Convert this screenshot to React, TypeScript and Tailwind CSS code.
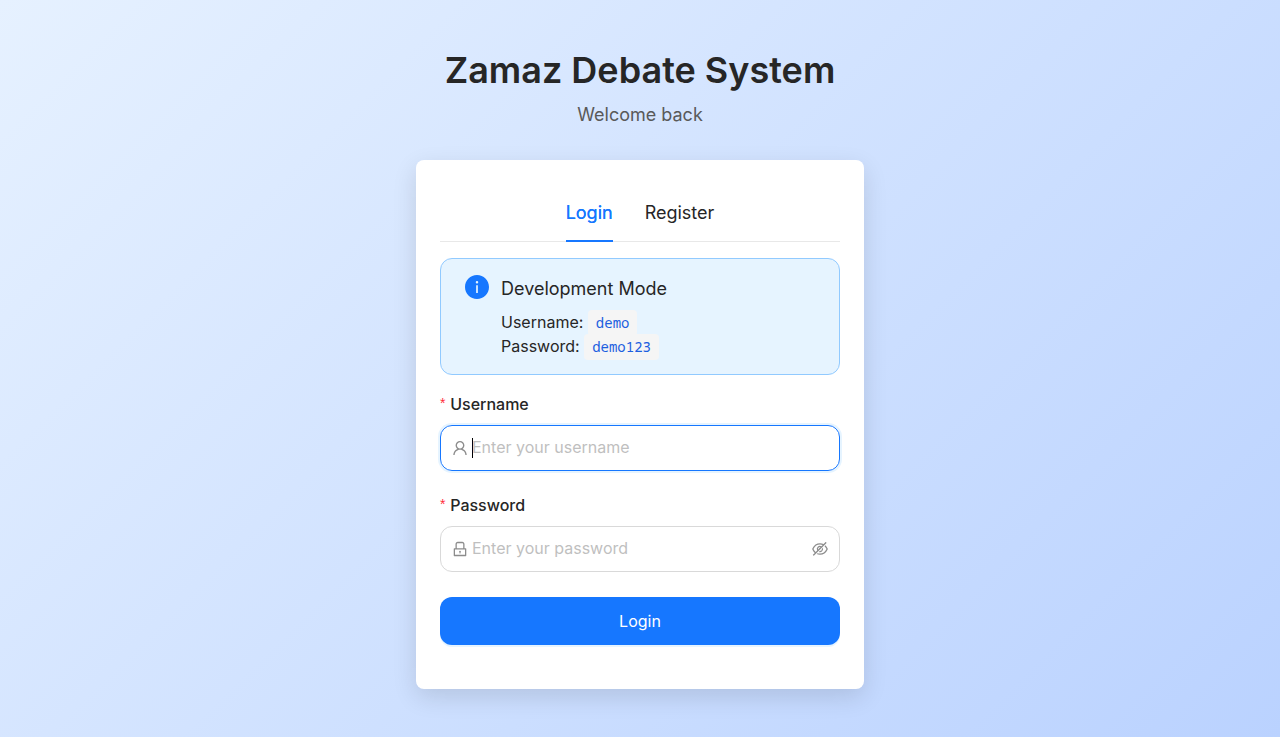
import {
  AiFillInfoCircle,
  AiOutlineEyeInvisible,
  AiOutlineLock,
  AiOutlineUser,
} from "react-icons/ai";

const iconBox = "64 64 896 896";

function FieldLabel({ children, htmlFor }: { children: string; htmlFor: string }) {
  return (
    <label htmlFor={htmlFor} className="flex h-6 items-center font-medium">
      <span className="mr-1 w-[6.2px] pb-[3px] font-['Liberation_Sans',sans-serif] text-sm font-normal leading-[18px] text-[#ff2d3a]">
        *
      </span>
      {children}
    </label>
  );
}

function Code({ children }: { children: string }) {
  return (
    <code className="rounded bg-[#f5f5f5] px-2 pb-1 pt-[3px] font-['Noto_Sans_Mono','DejaVu_Sans_Mono',monospace] text-sm text-[#1d5fe0]">
      {children}
    </code>
  );
}

export default function App() {
  return (
    <div className="flex h-[737px] flex-col items-center bg-[linear-gradient(135deg,#e6f1ff_0%,#bad2ff_100%)] pt-12 font-[Inter,sans-serif] text-base leading-6 text-[#262626]">
      <header className="text-center">
        <h1 className="text-4xl font-semibold leading-[45px]">Zamaz Debate System</h1>
        <p className="mt-2 text-lg leading-[27px] text-[#595959]">Welcome back</p>
      </header>

      <main className="mt-8 h-[529px] w-[448px] rounded-lg bg-white p-6 shadow-[0_8px_24px_rgba(0,0,0,0.12)]">
        <nav className="flex h-[58px] justify-center gap-8 border-b border-[#e8e8e8] text-lg leading-[27px]">
          <button className="h-[58px] border-b-2 border-[#1677ff] pt-px text-[#1677ff] [text-shadow:0_0_0.25px_currentColor]">
            Login
          </button>
          <button className="h-[58px] border-b-2 border-transparent pt-px">Register</button>
        </nav>

        <section className="mt-4 flex h-[117px] rounded-xl border border-[#91caff] bg-[#e6f4ff] px-6 pt-4">
          <AiFillInfoCircle viewBox={iconBox} className="mr-3 size-6 text-[#1677ff]" />
          <div>
            <h2 className="text-lg leading-[27px]">Development Mode</h2>
            <p className="mt-2">
              Username: <Code>demo</Code>
            </p>
            <p>
              Password: <Code>demo123</Code>
            </p>
          </div>
        </section>

        <form className="mt-[17px]">
          <FieldLabel htmlFor="username">Username</FieldLabel>
          <div className="mt-[9px] flex h-[46px] items-center rounded-xl border border-[#1677ff] px-[11px] shadow-[0_0_0_2px_rgba(5,145,255,0.1)]">
            <AiOutlineUser viewBox={iconBox} className="mr-1 size-4 text-[#8c8c8c]" />
            <span className="-mr-px h-5 w-px bg-black" />
            <input
              id="username"
              className="min-w-0 flex-1 pb-0.5 outline-none placeholder:text-[#bfbfbf]"
              placeholder="Enter your username"
            />
          </div>

          <div className="h-[22px]" />
          <FieldLabel htmlFor="password">Password</FieldLabel>
          <div className="mt-[9px] flex h-[46px] items-center rounded-xl border border-[#d9d9d9] px-[11px]">
            <AiOutlineLock viewBox={iconBox} className="mr-1 size-4 text-[#8c8c8c]" />
            <input
              id="password"
              type="password"
              className="min-w-0 flex-1 pb-0.5 outline-none placeholder:text-[#bfbfbf]"
              placeholder="Enter your password"
            />
            <AiOutlineEyeInvisible viewBox={iconBox} className="size-4 text-[#8c8c8c]" />
          </div>

          <button
            type="button"
            className="mt-[25px] h-12 w-full rounded-xl bg-[#1677ff] text-white shadow-[0_2px_0_rgba(5,145,255,0.1)]"
          >
            Login
          </button>
        </form>
      </main>
    </div>
  );
}
